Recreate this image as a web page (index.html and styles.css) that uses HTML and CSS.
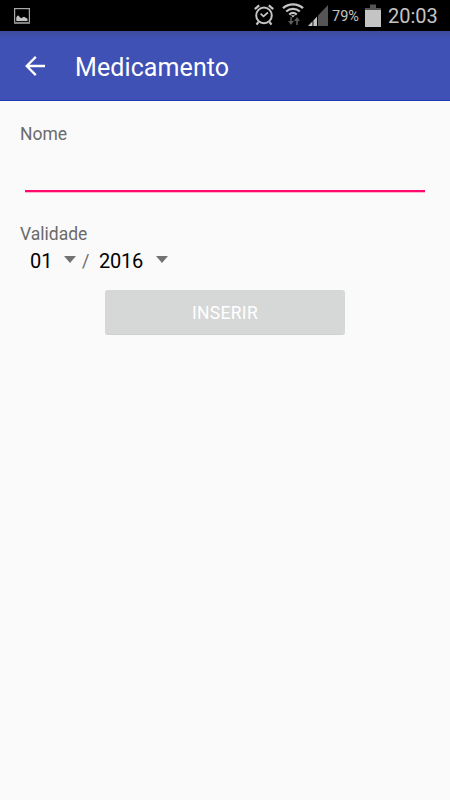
FILE: index.html
```html
<!DOCTYPE html>
<html lang="pt">
<head>
    <meta charset="UTF-8">
    <meta name="viewport" content="width=device-width, initial-scale=1.0">
    <title>Medicamento</title>
    <link rel="stylesheet" href="styles.css">
</head>
<body>
    <div class="status-bar">
        <svg class="icon-picture" width="16" height="16" viewBox="0 0 16 16">
            <rect x="0.6" y="0.6" width="14.8" height="14.4" fill="none" stroke="#a9a9a9" stroke-width="1.2"/>
            <path d="M0 14.8h16" stroke="#888" stroke-width="1.8"/>
            <path d="M2.3 13V9.2L4 7.2l2 2 1 1 3-1.5 3.5 2V13z" fill="#c4c4c4"/>
        </svg>
        <div class="status-right">
            <svg class="icon-alarm" width="20" height="22" viewBox="0 0 20 22" fill="none" stroke="#c4c4c4">
                <circle cx="10" cy="11.4" r="7.8" stroke-width="2"/>
                <path d="M6.6 9.6l2.9 2.8 4.4-3.9" stroke-width="1.7"/>
                <path d="M0.8 5.2L5.2 1.4M19.2 5.2l-4.4-3.8M4.5 18l-2 2.7M15.5 18l2 2.7" stroke-width="2.2"/>
            </svg>
            <svg class="icon-wifi" width="22" height="24" viewBox="0 0 22 24" fill="none">
                <path d="M1 6.2c5.6-5.2 14.4-5.2 20 0M4.2 9.5c3.9-3.5 9.7-3.5 13.6 0M7.3 12.6c2.2-2 5.2-2 7.4 0" stroke="#c4c4c4" stroke-width="2.3"/>
                <path d="M8.9 13.2h4.2L11 15.4z" fill="#c4c4c4"/>
                <path d="M8.3 15v4H6l3 4 3-4H9.8v-4zM14.2 23v-4H12l3-4 3 4h-2.2v4z" fill="#5c5c5c"/>
            </svg>
            <svg class="icon-signal" width="20" height="21" viewBox="0 0 20 21">
                <path d="M0 21L4.5 16.3V21z" fill="#c4c4c4"/>
                <path d="M5.4 21v-5.6L9 11.6V21z" fill="#c4c4c4"/>
                <path d="M10 21V10.5L20 0v21z" fill="#555"/>
            </svg>
            <span class="battery-level">79%</span>
            <svg class="icon-battery" width="16" height="23" viewBox="0 0 16 23">
                <path d="M0 6V4h5V0.5h6V4h5v2z" fill="#555"/>
                <rect y="6" width="16" height="17" fill="#c4c4c4"/>
            </svg>
            <span class="clock">20:03</span>
        </div>
    </div>

    <header class="toolbar">
        <svg class="icon-back" width="20" height="20" viewBox="0 0 20 20" fill="none" stroke="#fff" stroke-width="2.3">
            <path d="M20 10H2M10.8 0.9L1.7 10l9.1 9.1"/>
        </svg>
        <h1 class="title">Medicamento</h1>
    </header>

    <form class="medicine-form">
        <label class="label" for="nome">Nome</label>
        <input class="text-input" type="text" name="nome" id="nome">

        <span class="label label-date">Validade</span>
        <div class="date-row">
            <span class="month">01</span>
            <span class="arrow"></span>
            <span class="slash">/</span>
            <span class="year">2016</span>
            <span class="arrow"></span>
        </div>

        <button class="insert" type="button" disabled>INSERIR</button>
    </form>
</body>
</html>
```

FILE: styles.css
```css
* {
  box-sizing: border-box;
  margin: 0;
  padding: 0;
}

body {
  font-family: Roboto, sans-serif;
  background: #fafafa;
  min-height: 100vh;
}

/* Status bar */
.status-bar {
  display: flex;
  justify-content: space-between;
  height: 31px;
  padding: 0 12px 0 14px;
  background: #000;
  color: #c4c4c4;
}

.icon-picture {
  margin-top: 8px;
}

.status-right {
  display: flex;
}

.icon-alarm {
  margin-top: 4px;
}

.icon-wifi {
  margin: 2px 0 0 8px;
}

.icon-signal {
  margin: 5px 4px 0 4px;
}

.battery-level {
  width: 29px;
  margin-right: 4px;
  font-size: 14.5px;
  line-height: 34px;
  white-space: nowrap;
}

.icon-battery {
  margin: 4px 7px 0 0;
}

.clock {
  width: 50px;
  font-size: 20px;
  line-height: 33px;
  white-space: nowrap;
}

/* Toolbar */
.toolbar {
  display: flex;
  align-items: center;
  height: 70px;
  padding: 0 25px;
  background: linear-gradient(#3d4a9b, #3f51b5 8px);
  border-bottom: 1px solid #1c3cb4;
  color: #fff;
}

.title {
  margin-left: 30px;
  padding-top: 4px;
  font-size: 25px;
  font-weight: 400;
  line-height: 30px;
  letter-spacing: 0.1px;
}

/* Form */
.medicine-form {
  display: flex;
  flex-direction: column;
  padding: 22px 20px;
}

.label {
  font-size: 17.5px;
  line-height: 22px;
  color: #6b6b6b;
}

.text-input {
  height: 47px;
  margin: 0 5px;
  border: none;
  border-bottom: 2px solid #ff0a6c;
  background: transparent;
  box-shadow: 0 1px 0 #ffb3d0;
  outline: none;
  font: 20px Roboto, sans-serif;
}

.label-date {
  margin-top: 31px;
}

.date-row {
  display: flex;
  align-items: center;
  height: 30px;
  padding: 2px 0 0 10px;
  font-size: 20px;
  line-height: 26px;
  color: #000;
}

.arrow {
  margin-bottom: 3px;
  border: 6.5px solid transparent;
  border-top: 7px solid #727272;
  border-bottom: none;
}

.month {
  width: 34px;
}

.slash {
  width: 17px;
  padding-left: 6px;
  font-size: 18px;
  color: #6b6b6b;
}

.year {
  width: 57px;
  margin-left: 6px;
  letter-spacing: -0.2px;
}

/* Insert button */
.insert {
  align-self: center;
  width: 240px;
  height: 45px;
  margin-top: 15px;
  padding-top: 2px;
  border: none;
  border-bottom: 1px solid #cfd1d0;
  border-radius: 3px;
  background: #d6d8d7;
  color: #fff;
  font: 17.5px Roboto, sans-serif;
  letter-spacing: 0.3px;
}
```
